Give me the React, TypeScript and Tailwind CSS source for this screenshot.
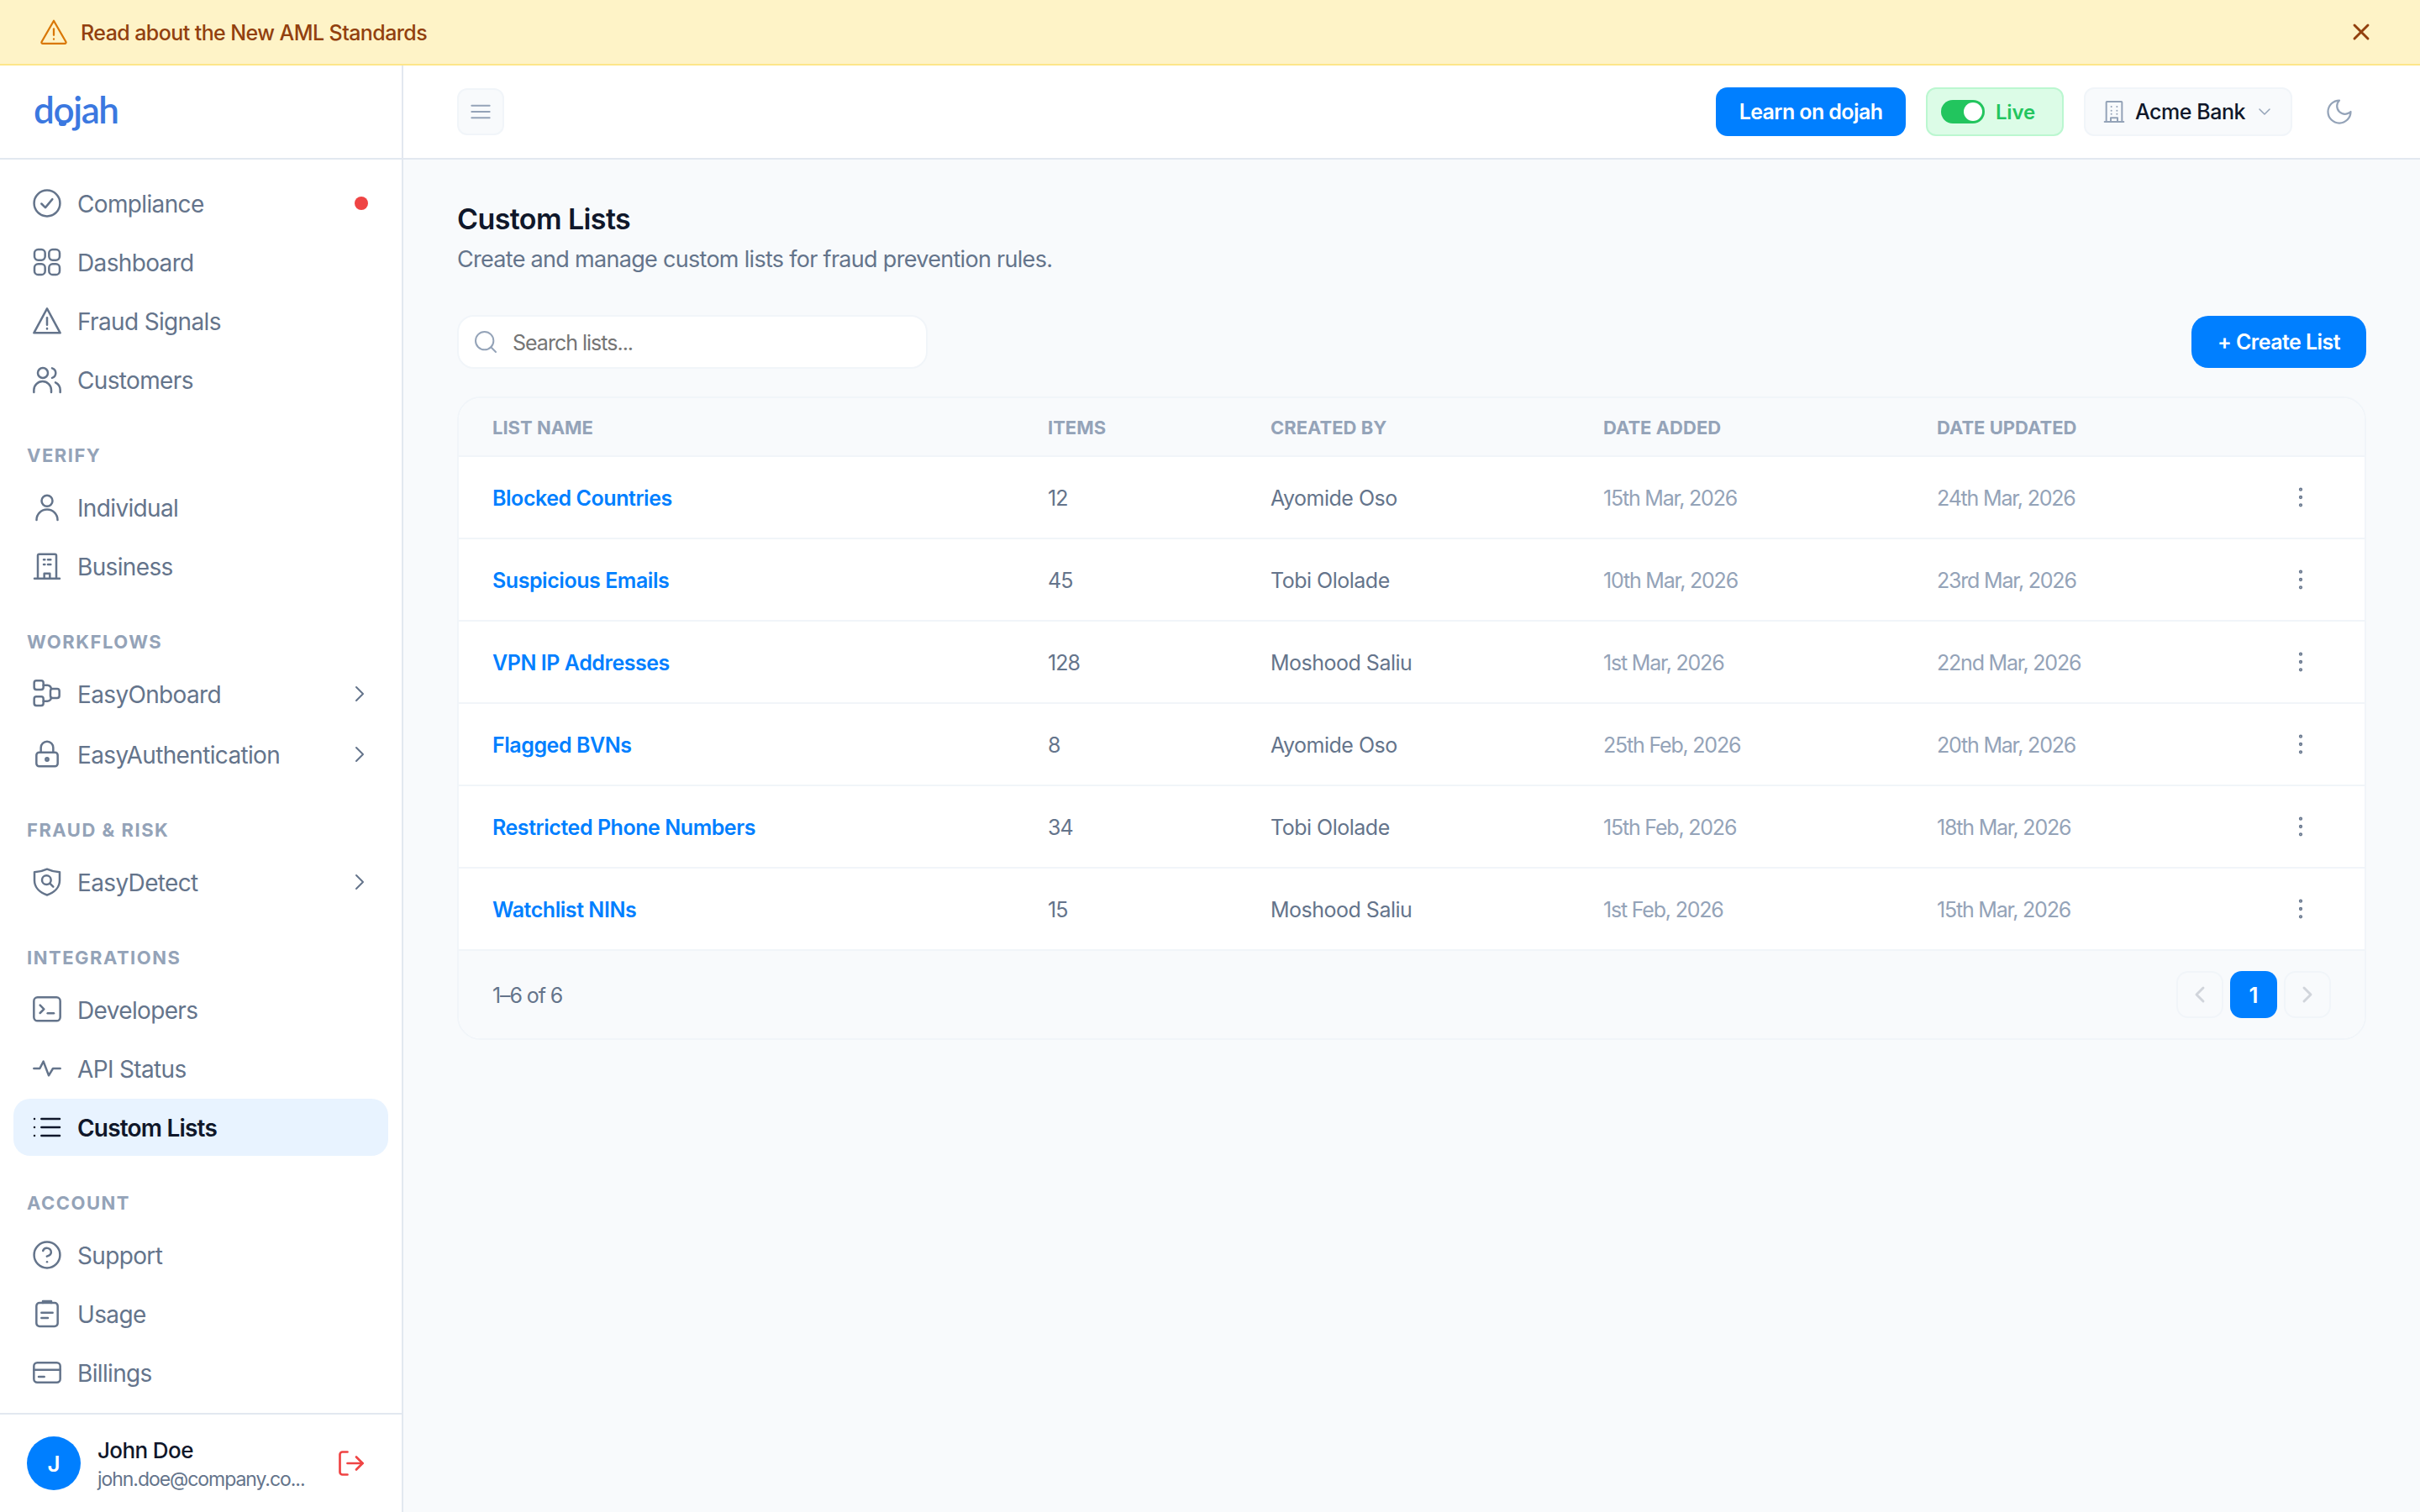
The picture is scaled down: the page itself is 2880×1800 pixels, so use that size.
import React from "react";

const S = ({ size = 40, sw = 1.5, className = "", children }: { size?: number; sw?: number; className?: string; children: React.ReactNode }) => (
  <svg width={size} height={size} viewBox="0 0 24 24" fill="none" stroke="currentColor" strokeWidth={sw} strokeLinecap="round" strokeLinejoin="round" className={"shrink-0 " + className}>
    {children}
  </svg>
);

const icons: Record<string, React.ReactNode> = {
  compliance: <><circle cx="12" cy="12" r="9.25" /><path d="M8 12.3l2.8 2.8 5-6" /></>,
  dashboard: <><rect x="3" y="3" width="7.6" height="7.6" rx="2.6" /><rect x="13.4" y="3" width="7.6" height="7.6" rx="2.6" /><rect x="3" y="13.4" width="7.6" height="7.6" rx="2.6" /><rect x="13.4" y="13.4" width="7.6" height="7.6" rx="2.6" /></>,
  fraud: <><path d="M12 3.2L21.4 20.6H2.6Z" /><path d="M12 9.8v5" /><path d="M12 17.4v.3" /></>,
  customers: <><circle cx="9" cy="7.2" r="3.6" /><path d="M2.6 21v-1.6a6.2 6.2 0 0 1 12.4 0V21" /><path d="M15.6 3.8a3.6 3.6 0 0 1 0 6.9" /><path d="M21.4 21v-1.6a6 6 0 0 0-3.4-5.4" /></>,
  individual: <><circle cx="12" cy="7.4" r="3.9" /><path d="M4.5 21a7.5 7.5 0 0 1 15 0" /></>,
  business: <><path d="M5.4 20.8V4.4a1 1 0 0 1 1-1h11.2a1 1 0 0 1 1 1v16.4" /><path d="M3 20.8h18" /><path d="M9.6 7.4h.8M12.6 7.4h2M9.6 10.8h.8M12.6 10.8h2" /><path d="M10 20.8v-3.6h4v3.6" /></>,
  onboard: <><rect x="2.8" y="2.6" width="6.6" height="6.4" rx="1.6" /><rect x="2.8" y="14" width="6.6" height="6.4" rx="1.6" /><rect x="14.4" y="8.4" width="6.4" height="6.6" rx="1.6" /><path d="M9.4 5.8h2.8a3 3 0 0 1 2.8 2.6M9.4 17.2h2.8a3 3 0 0 0 2.8-2.2" /></>,
  lock: <><rect x="4.4" y="10.6" width="15.2" height="10" rx="2" /><path d="M7.6 10.6V7.2a4.4 4.4 0 0 1 8.8 0v3.4" /><circle cx="12" cy="15.6" r="1" /></>,
  detect: <><path d="M12 2.8C15 4.2 18 4.9 21 4.9V11C21 16 17 19.6 12 21.3C7 19.6 3 16 3 11V4.9C6 4.9 9 4.2 12 2.8Z" /><circle cx="11.6" cy="10.6" r="3.2" /><path d="M14 13l2.4 2.4" /></>,
  developers: <><rect x="2.6" y="3.2" width="18.8" height="16.8" rx="2.6" /><path d="M7 8.8l2.8 2.8L7 14.4" /><path d="M12.4 14.6h4.4" /></>,
  api: <path d="M2.6 12h4.2l2.6-5 3.8 10 3-5h5.2" />,
  list: <><path d="M8 6h13M8 12h13M8 18h13" /><path d="M3 6h.01M3 12h.01M3 18h.01" /></>,
  support: <><circle cx="12" cy="12" r="9.25" /><path d="M9.1 9a3 3 0 0 1 5.8 1c0 2-3 3-3 3" /><path d="M12 17h.01" /></>,
  usage: <><rect x="4.4" y="4.2" width="15.2" height="16.8" rx="2.2" /><path d="M9 4.2V3h6v1.2" /><path d="M8 11.2h8M8 15h4.6" /></>,
  billing: <><rect x="2.6" y="5" width="18.8" height="14" rx="2.4" /><path d="M2.6 10h18.8" /><path d="M6 15h4" /></>,
};

const NavItem = ({ icon, label, active, dot, chevron, extra = "" }: { icon: string; label: string; active?: boolean; dot?: boolean; chevron?: boolean; extra?: string }) => (
  <div className={`flex h-[68px] items-center gap-4 rounded-[20px] pl-5 pr-[18px] text-[28px] ${active ? "bg-[#e8f3ff] font-semibold text-[#0f172a]" : "font-normal text-[#64748b]"} ${extra}`}>
    <S>{icons[icon]}</S>
    <span className={`flex-1 pt-[2px] ${active ? "tracking-[-0.8px]" : "tracking-[-0.65px]"}`}>{label}</span>
    {dot && <span className="mr-[6px] h-4 w-4 rounded-full bg-[#ef4444]" />}
    {chevron && (
      <S size={32}><path d="M9 6l6 6-6 6" /></S>
    )}
  </div>
);

const Section = ({ title, children }: { title?: string; children: React.ReactNode }) => (
  <div className={title ? "mt-10 flex flex-col gap-[2px]" : "flex flex-col gap-[2px]"}>
    {title && <div className="mb-[10px] h-8 pl-4 text-[22px] font-bold leading-8 tracking-[1.5px] text-[#94a3b8]">{title}</div>}
    {children}
  </div>
);

const rows = [
  ["Blocked Countries", "12", "Ayomide Oso", "15th Mar, 2026", "24th Mar, 2026"],
  ["Suspicious Emails", "45", "Tobi Ololade", "10th Mar, 2026", "23rd Mar, 2026"],
  ["VPN IP Addresses", "128", "Moshood Saliu", "1st Mar, 2026", "22nd Mar, 2026"],
  ["Flagged BVNs", "8", "Ayomide Oso", "25th Feb, 2026", "20th Mar, 2026"],
  ["Restricted Phone Numbers", "34", "Tobi Ololade", "15th Feb, 2026", "18th Mar, 2026"],
  ["Watchlist NINs", "15", "Moshood Saliu", "1st Feb, 2026", "15th Mar, 2026"],
];

export default function App() {
  return (
    <div className="flex h-screen w-full flex-col overflow-hidden bg-[#f8fafc] font-['Inter',sans-serif]">
      <div className="flex h-[78px] shrink-0 items-center border-b-2 border-[#fde68a] bg-[#fef3c7] pl-[46px] pr-[54px]">
        <S size={36} className="text-[#d97706]"><path d="M12 3.2l9.6 16.6a1 1 0 0 1-.9 1.5H3.3a1 1 0 0 1-.9-1.5Z" /><path d="M12 9.5v5" /><path d="M12 17.6v.2" /></S>
        <span className="ml-[14px] flex-1 pt-[3px] text-[25px] font-medium tracking-[-0.58px] text-[#92400e]">Read about the New AML Standards</span>
        <S size={32} sw={2.2} className="text-[#92400e]"><path d="M18 6L6 18M6 6l12 12" /></S>
      </div>

      <div className="flex min-h-0 flex-1">
        <aside className="flex w-[480px] shrink-0 flex-col border-r-2 border-[#e2e8f0] bg-white">
          <div className="flex h-[112px] shrink-0 items-center border-b-2 border-[#e2e8f0] pb-[6px] pl-10">
            <span className="relative text-[44px] font-semibold leading-none tracking-[-1.4px] text-[#3b78e0] font-['Lato',sans-serif]">
              dojah
              <span className="absolute left-[30px] top-[36px] h-[6px] w-[9px] rounded-b-[3px] bg-[#3b78e0]" />
            </span>
          </div>
          <nav className="flex min-h-0 flex-1 flex-col px-4 pt-[18px]">
            <Section>
              <NavItem icon="compliance" label="Compliance" dot />
              <NavItem icon="dashboard" label="Dashboard" />
              <NavItem icon="fraud" label="Fraud Signals" />
              <NavItem icon="customers" label="Customers" />
            </Section>
            <Section title="VERIFY">
              <NavItem icon="individual" label="Individual" />
              <NavItem icon="business" label="Business" />
            </Section>
            <Section title="WORKFLOWS">
              <NavItem icon="onboard" label="EasyOnboard" chevron />
              <NavItem icon="lock" label="EasyAuthentication" chevron extra="mt-[2px]" />
            </Section>
            <Section title="FRAUD & RISK">
              <NavItem icon="detect" label="EasyDetect" chevron />
            </Section>
            <Section title="INTEGRATIONS">
              <NavItem icon="developers" label="Developers" />
              <NavItem icon="api" label="API Status" />
              <NavItem icon="list" label="Custom Lists" active />
            </Section>
            <Section title="ACCOUNT">
              <NavItem icon="support" label="Support" />
              <NavItem icon="usage" label="Usage" />
              <NavItem icon="billing" label="Billings" />
            </Section>
          </nav>
          <div className="flex h-[118px] shrink-0 items-center border-t-2 border-[#e2e8f0] pl-8">
            <div className="flex h-16 w-16 shrink-0 items-center justify-center rounded-full bg-[#007fff] text-[26px] font-semibold text-white">J</div>
            <div className="ml-5 w-[284px] pt-[2px]">
              <div className="text-[26px] font-medium leading-[36px] tracking-[-0.6px] text-[#0f172a]">John Doe</div>
              <div className="whitespace-nowrap text-[23px] leading-[32px] tracking-[-1.05px] text-[#64748b]">john.doe@company.co...</div>
            </div>
            <S size={36} sw={1.8} className="text-[#ef4444]"><path d="M9 21H5a2 2 0 0 1-2-2V5a2 2 0 0 1 2-2h4" /><path d="M16 17l5-5-5-5" /><path d="M21 12H9" /></S>
          </div>
        </aside>

        <main className="flex min-w-0 flex-1 flex-col">
          <header className="flex h-[112px] shrink-0 items-center border-b-2 border-[#e2e8f0] bg-white pl-[64px] pr-[64px]">
            <button className="flex h-14 w-14 items-center justify-center rounded-xl border-2 border-[#f1f5f9] bg-[#f8fafc] text-[#94a3b8]">
              <S size={32}><path d="M4 6.5h16M4 12h16M4 17.5h16" /></S>
            </button>
            <div className="ml-auto flex items-center gap-6">
              <button className="flex h-[58px] w-[226px] items-center justify-center rounded-[14px] bg-[#007fff] pt-[2px] text-[25px] font-semibold tracking-[-0.6px] text-white">Learn on dojah</button>
              <div className="flex h-[58px] w-[164px] items-center rounded-[12px] border-2 border-[#bbf7d0] bg-[#dcfce7] pl-4">
                <div className="flex h-7 w-[52px] items-center justify-end rounded-full bg-[#22c55e] pr-[3px]"><div className="h-[22px] w-[22px] rounded-full bg-white" /></div>
                <span className="ml-[13px] pt-[2px] text-[24px] font-semibold tracking-[-0.2px] text-[#22c55e]">Live</span>
              </div>
              <div className="flex h-[58px] w-[248px] items-center rounded-[12px] border-2 border-[#f1f5f9] bg-[#f8fafc] pl-[18px]">
                <S size={32} className="text-[#94a3b8]"><path d="M5 21V3.6a.6.6 0 0 1 .6-.6h12.8a.6.6 0 0 1 .6.6V21Z" /><path d="M3.5 21h17" /><path d="M9 21v-3.5h6V21" /><path d="M9.5 7.5h.01M14.5 7.5h.01M9.5 11h.01M14.5 11h.01M9.5 14h.01M14.5 14h.01" /></S>
                <span className="ml-[9px] pt-[2px] text-[25px] font-medium tracking-[-0.45px] text-[#0f172a]">Acme Bank</span>
                <S size={24} className="ml-[11px] text-[#94a3b8]"><path d="M6 9l6 6 6-6" /></S>
              </div>
              <button className="flex h-16 w-16 items-center justify-center text-[#94a3b8]">
                <S size={36}><path d="M12 3a6 6 0 0 0 9 9 9 9 0 1 1-9-9Z" /></S>
              </button>
            </div>
          </header>

          <div className="flex-1 px-16 pt-12">
            <h1 className="h-[46px] text-[34px] font-semibold leading-[46px] tracking-[-0.6px] text-[#0f172a]">Custom Lists</h1>
            <p className="mt-[3px] h-[44px] text-[27px] leading-[44px] tracking-[-0.7px] text-[#64748b]">Create and manage custom lists for fraud prevention rules.</p>

            <div className="mt-[44px] flex items-center justify-between">
              <div className="flex h-16 w-[560px] items-center rounded-[20px] border-2 border-[#f1f5f9] bg-white pl-[16px]">
                <S size={32} className="text-[#94a3b8]"><circle cx="11" cy="11" r="8" /><path d="M21 21l-4.3-4.3" /></S>
                <span className="ml-[16px] pt-[3px] text-[25px] tracking-[-1px] text-[#757575]">Search lists...</span>
              </div>
              <button className="flex h-[62px] w-[208px] items-center justify-center rounded-[20px] bg-[#007fff] pt-[2px] text-[25px] font-semibold tracking-[-0.55px] text-white">+ Create List</button>
            </div>

            <div className="mt-[33px] overflow-hidden rounded-[28px] border-2 border-[#f1f5f9] bg-white">
              <div className="grid h-[70px] grid-cols-[661px_265px_396px_397px_1fr] items-center border-b-2 border-[#f1f5f9] bg-[#f8fafc] px-10 pt-[2px] text-[22px] font-bold tracking-[0px] text-[#94a3b8]">
                <div>LIST NAME</div><div>ITEMS</div><div>CREATED BY</div><div>DATE ADDED</div><div>DATE UPDATED</div>
              </div>
              {rows.map((r) => (
                <div key={r[0]} className="grid h-[98px] grid-cols-[661px_265px_396px_397px_1fr] items-center border-b-2 border-[#f1f5f9] px-10 text-[25px]">
                  <div className="pt-[4px] font-semibold tracking-[-0.45px] text-[#007fff]">{r[0]}</div>
                  <div className="pt-[4px] tracking-[-1px] text-[#64748b]">{r[1]}</div>
                  <div className="pt-[4px] tracking-[-0.5px] text-[#64748b]">{r[2]}</div>
                  <div className="pt-[4px] tracking-[-1.2px] text-[#94a3b8]">{r[3]}</div>
                  <div className="flex items-center justify-between pr-[20px] tracking-[-1.2px] text-[#94a3b8]">
                    <span className="pt-[4px]">{r[4]}</span>
                    <S size={32} className="text-[#64748b]" sw={2}><circle cx="12" cy="5" r=".6" /><circle cx="12" cy="12" r=".6" /><circle cx="12" cy="19" r=".6" /></S>
                  </div>
                </div>
              ))}
              <div className="flex h-[104px] items-center justify-between bg-[#f8fafc] px-10">
                <span className="pt-[3px] text-[25px] tracking-[-1.1px] text-[#64748b]">1–6 of 6</span>
                <div className="flex items-center gap-2">
                  <div className="flex h-14 w-14 items-center justify-center rounded-[14px] border-2 border-[#f1f5f9] text-[#d1d5db]"><S size={32} sw={2.2}><path d="M15 6l-6 6 6 6" /></S></div>
                  <div className="flex h-14 w-14 items-center justify-center rounded-[14px] bg-[#007fff] text-[26px] font-semibold text-white">1</div>
                  <div className="flex h-14 w-14 items-center justify-center rounded-[14px] border-2 border-[#f1f5f9] text-[#d1d5db]"><S size={32} sw={2.2}><path d="M9 6l6 6-6 6" /></S></div>
                </div>
              </div>
            </div>
          </div>
        </main>
      </div>
    </div>
  );
}
